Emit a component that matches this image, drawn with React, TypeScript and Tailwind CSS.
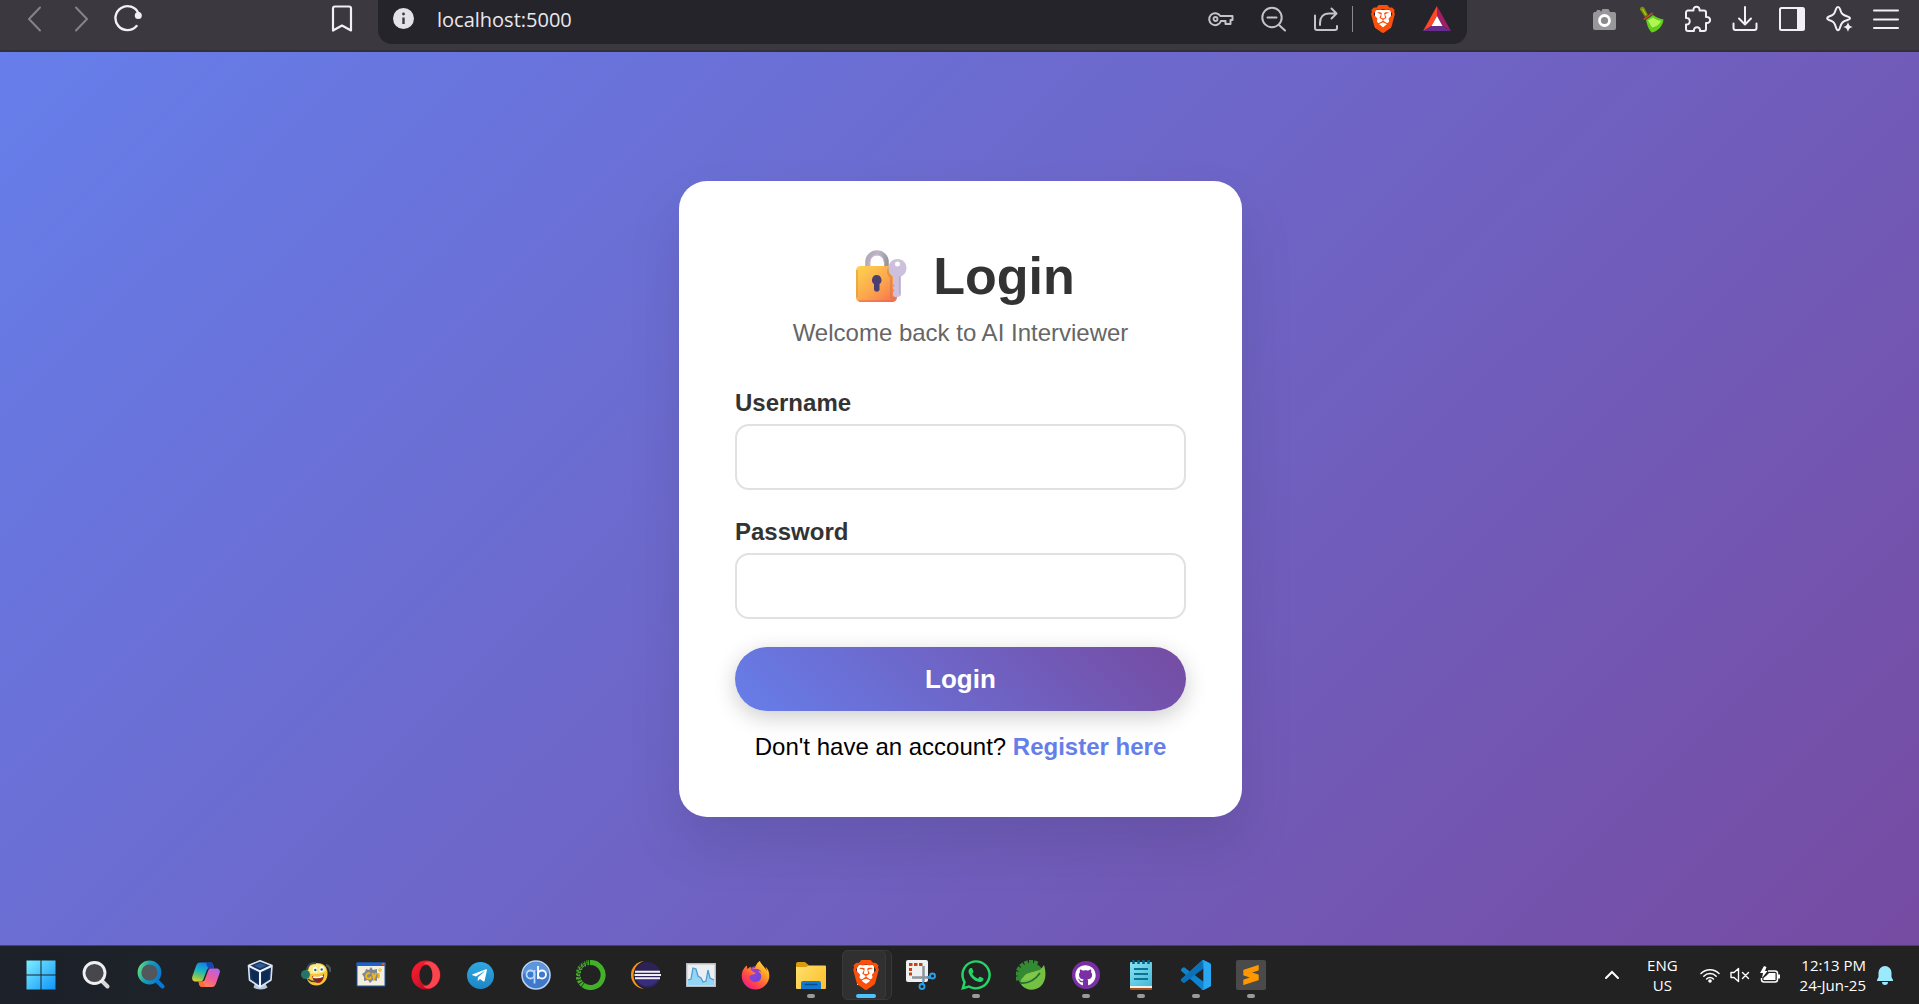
import React, { useId } from "react";
import { SiBrave, SiSublimetext } from "react-icons/si";
import { FaGithub, FaWhatsapp, FaFirefoxBrowser, FaTelegramPlane } from "react-icons/fa";

type IconProps = { children: React.ReactNode; box?: string; className?: string };

function Icon({ children, box = "0 0 30 30", className = "size-[30px]" }: IconProps) {
  return (
    <svg viewBox={box} className={className} fill="none" aria-hidden="true">
      {children}
    </svg>
  );
}

/* ---------- browser toolbar ---------- */

function ToolButton({ label, children, className = "" }: { label: string; children: React.ReactNode; className?: string }) {
  return (
    <button type="button" aria-label={label} className={`flex h-7 w-7 shrink-0 items-center justify-center ${className}`}>
      {children}
    </button>
  );
}

function BraveShield({ className }: { className: string }) {
  return (
    <span className={`relative flex items-center justify-center ${className}`}>
      <span className="absolute inset-x-[22%] inset-y-[18%] bg-white" />
      <SiBrave className="relative size-full text-[#fb4f0a]" />
    </span>
  );
}

function Toolbar() {
  return (
    <header className="flex h-[52px] shrink-0 items-start border-b-2 border-[#323036] bg-[#3b393f] text-[#f1f0f4]">
      <div className="flex w-[378px] shrink-0 items-center pt-1 pl-5">
        <ToolButton label="Back" className="text-[#85838a]">
          <Icon box="0 0 28 28" className="size-7"><path d="M20 3.500 9 15l11 11.500" stroke="currentColor" strokeWidth="2" strokeLinecap="round" strokeLinejoin="round" /></Icon>
        </ToolButton>
        <ToolButton label="Forward" className="ml-5 text-[#85838a]">
          <Icon box="0 0 28 28" className="size-7"><path d="M8 3.500 19 15 8 26.500" stroke="currentColor" strokeWidth="2" strokeLinecap="round" strokeLinejoin="round" /></Icon>
        </ToolButton>
        <ToolButton label="Reload" className="ml-[18px]">
          <Icon box="0 0 28 28" className="size-7">
            <path d="M24.500 9.500A12 12 0 1 0 22.500 22" stroke="currentColor" strokeWidth="2.400" strokeLinecap="round" />
            <circle cx="24.300" cy="11.600" r="3.500" fill="currentColor" />
          </Icon>
        </ToolButton>
        <ToolButton label="Bookmark this page" className="ml-auto mr-[22px]">
          <Icon box="0 0 28 28" className="size-7"><path d="M5 4.500A2 2 0 0 1 7 2.500H21a2 2 0 0 1 2 2V26.500L14 21.500l-9 5Z" stroke="currentColor" strokeWidth="2.200" strokeLinejoin="round" /></Icon>
        </ToolButton>
      </div>

      <div className="flex h-11 min-w-0 flex-1 items-start rounded-b-[14px] bg-[#25242a] pr-4 pl-3 text-[#c5c3ca]">
        <ToolButton label="View site information" className="mt-1">
          <Icon box="0 0 24 24" className="size-6">
            <circle cx="11.500" cy="12.500" r="10.500" fill="#e3e2e8" />
            <path d="M11.500 11.500v6.500" stroke="#3b393f" strokeWidth="2.400" />
            <circle cx="11.500" cy="8" r="1.400" fill="#3b393f" />
          </Icon>
        </ToolButton>
        <input
          aria-label="Address"
          defaultValue="localhost:5000"
          className="ml-[19px] h-[38px] min-w-0 flex-1 bg-transparent font-['Open_Sans','Noto_Sans',sans-serif] text-[20px] text-[#e9e8ee] outline-none"
        />
        <div className="flex items-center pt-[5px]">
          <ToolButton label="Passwords">
            <Icon box="0 0 28 28" className="size-7">
              <path d="M13.300 11H25.500v4H23.500v4H18.500v-3h-4.600a6 6 0 1 1-.6-5Z" stroke="currentColor" strokeWidth="2" strokeLinejoin="round" />
              <circle cx="8.500" cy="14" r="2" stroke="currentColor" strokeWidth="1.800" />
            </Icon>
          </ToolButton>
          <ToolButton label="Zoom out" className="ml-6">
            <Icon box="0 0 28 28" className="size-7">
              <path d="M20 20l6 5.500M8.500 12.500h9" stroke="currentColor" strokeWidth="2" strokeLinecap="round" />
              <circle cx="13" cy="12.500" r="9.700" stroke="currentColor" strokeWidth="2" />
            </Icon>
          </ToolButton>
          <ToolButton label="Share" className="ml-[25px]">
            <Icon box="0 0 28 28" className="size-7">
              <path d="M3 10.500V23a2 2 0 0 0 2 2H23a2 2 0 0 0 2-2v-2M8 20V18c0-5.500 3-9.500 9-9.500h7M19.500 3.500l5 5-5 5" stroke="currentColor" strokeWidth="2" strokeLinecap="round" strokeLinejoin="round" />
            </Icon>
          </ToolButton>
          <span className="mx-3 h-[26px] w-px bg-[#8a8890]" />
          <ToolButton label="Brave Shields" className="ml-1"><BraveShield className="size-7" /></ToolButton>
          <ToolButton label="Brave Rewards" className="ml-[26px]">
            <Icon box="0 0 28 26" className="h-[26px] w-7">
              <path d="M14 0 0 25l8.500-5L14 10Z" fill="#ff4724" />
              <path d="M14 0 28 25l-8.500-5L14 10Z" fill="#9e1f63" />
              <path d="M0 25H28l-8.500-5h-11Z" fill="#662d91" />
              <path d="M14 10 8.500 20h11Z" fill="#fff" />
            </Icon>
          </ToolButton>
        </div>
      </div>

      <div className="flex w-[452px] shrink-0 items-center justify-end gap-[19px] pt-[5px] pr-[19px]">
        <ToolButton label="Screenshot extension">
          <Icon box="0 0 28 28" className="size-7">
            <path d="M4 7h2l1-2h3l1 2 1.500-3h6L20 7h4a2 2 0 0 1 2 2v14a2 2 0 0 1-2 2H5a2 2 0 0 1-2-2V9Z" fill="#98979b" />
            <circle cx="14.500" cy="15.500" r="5" fill="#8a898d" stroke="#fff" strokeWidth="2.800" />
          </Icon>
        </ToolButton>
        <ToolButton label="Cleaner extension">
          <Icon box="0 0 28 28" className="size-7">
            <path d="M3 3.500C4 1 7 1.500 8 4l3 6-3 2-4-6C3 5 2.500 4.500 3 3.500Z" fill="#7c8c0a" />
            <path d="m5.500 4 3.500 6" stroke="#b4c91c" strokeWidth="1.300" />
            <path d="m9 15 7-5c3 2.500 6 3.500 10.500 4.500-.5 6-5.500 12-12 13l-2.500-3.500-1-2-1-3Z" fill="#62d01a" />
            <path d="m11 15.500 5-3c2 2 5 3 8 3.500-2 4-5 6-9 6.500Z" fill="#b2f456" />
            <path d="m7.500 14 7.500-5.500" stroke="#b5501b" strokeWidth="2" strokeLinecap="round" />
          </Icon>
        </ToolButton>
        <ToolButton label="Extensions">
          <Icon box="0 0 28 28" className="size-7">
            <path d="M4 5.500H9.500C8.500 .5 16.500 .5 15.500 5.500H20a2 2 0 0 1 2 2V12c5.500-1 5.500 7 0 6v6a2 2 0 0 1-2 2H16c1-5-7-5-6 0H4a2 2 0 0 1-2-2V19.500c5 1 5-7.500 0-6.500V7.500a2 2 0 0 1 2-2Z" stroke="currentColor" strokeWidth="2" strokeLinejoin="round" />
          </Icon>
        </ToolButton>
        <ToolButton label="Downloads">
          <Icon box="0 0 28 28" className="size-7">
            <path d="M14 2v17M8 13.500l6 6 6-6M2.500 18.500V23a2 2 0 0 0 2 2h19a2 2 0 0 0 2-2v-4.500" stroke="currentColor" strokeWidth="2" strokeLinecap="round" strokeLinejoin="round" />
          </Icon>
        </ToolButton>
        <ToolButton label="Sidebar">
          <Icon box="0 0 28 28" className="size-7">
            <rect x="2" y="3" width="24" height="22" rx="1.500" stroke="currentColor" strokeWidth="2" />
            <path d="M19 3h7v22h-7Z" fill="currentColor" />
          </Icon>
        </ToolButton>
        <ToolButton label="Assistant">
          <Icon box="0 0 28 28" className="size-7">
            <path d="M13 2c1 0 1.500.5 2 2 1.500 5 2.500 6 7.500 7.500 3.500 1 3.500 2.500 0 3.500-5 1.500-6 2.500-7.500 7.500-1 3.500-3 3.500-4 0C9.500 17.500 8.500 16.500 4 15c-2.500-1-2.500-2.500 0-3.500C8.500 10 9.500 9 11 4c.5-1.500 1-2 2-2Z" stroke="currentColor" strokeWidth="2" strokeLinejoin="round" />
            <path d="M23 17c1 3.500 1.500 4 5 5-3.500 1-4 1.500-5 5-1-3.500-1.500-4-5-5 3.500-1 4-1.500 5-5Z" fill="currentColor" />
          </Icon>
        </ToolButton>
        <ToolButton label="Menu">
          <Icon box="0 0 28 28" className="size-7"><path d="M2 5.500H26M2 14.500H26M2 23H26" stroke="currentColor" strokeWidth="2" strokeLinecap="round" /></Icon>
        </ToolButton>
      </div>
    </header>
  );
}

/* ---------- login card ---------- */

function LockWithKey() {
  return (
    <svg viewBox="0 0 72 52" className="h-[52px] w-[72px]" fill="none" role="img" aria-label="Locked with key">
      <defs>
        <linearGradient id="lockBody" x1="16" y1="16" x2="46" y2="52" gradientUnits="userSpaceOnUse">
          <stop stopColor="#ffcf4d" /><stop offset=".55" stopColor="#fba54d" /><stop offset="1" stopColor="#f97350" />
        </linearGradient>
        <linearGradient id="lockShackle" x1="20" y1="0" x2="42" y2="10" gradientUnits="userSpaceOnUse">
          <stop stopColor="#a9a6ac" /><stop offset=".5" stopColor="#bdb6c4" /><stop offset="1" stopColor="#98959c" />
        </linearGradient>
      </defs>
      <path d="M21.500 18V12a9.500 9.500 0 0 1 19 0v6" stroke="url(#lockShackle)" strokeWidth="4.600" />
      <path d="M24 18V12a7 7 0 0 1 14 0" stroke="#c9aadd" strokeWidth="1" />
      <rect x="10" y="16" width="41" height="36" rx="4.500" fill="url(#lockBody)" />
      <path d="M11 20v27" stroke="#d98c3c" strokeWidth="1.500" opacity=".6" />
      <path d="M13 51h34" stroke="#ef6150" strokeWidth="1.500" opacity=".7" />
      <path d="M30.500 25a5 5 0 0 1 3 9v6a3 3 0 0 1-5.500 0v-6a5 5 0 0 1 2.500-9Z" fill="#4b3e70" />
      <path d="M43 17c-2 5-1 8 2 10v20c0 2 2 2 4 1" stroke="#c97745" strokeWidth="2" opacity=".5" />
      <path fillRule="evenodd" d="M51.500 9c5.500 0 9 4 9 9 0 4-2 7-5.500 8.500V45c0 2-8 3.500-8 0v-3l1.500-1.500L47 39v-2l1.500-1.500L47 34v-7.500c-3.500-2-4.500-5-4.500-8.500 0-5 3.500-9 9-9Zm0 2.500a2.500 2.500 0 1 0 0 5 2.500 2.500 0 0 0 0-5Z" fill="#cdc0dd" />
      <path d="M53.500 26v18" stroke="#bba8d3" strokeWidth="1.200" />
    </svg>
  );
}

function Field({ label, type }: { label: string; type: string }) {
  const id = useId();
  return (
    <div className="flex flex-col gap-[7px]">
      <label htmlFor={id} className="font-bold text-[#333]">{label}</label>
      <input id={id} type={type} className="h-[66px] w-full rounded-[14px] border-2 border-[#e1e1e1] bg-white px-5 outline-none" />
    </div>
  );
}

function LoginCard() {
  return (
    <section className="w-full max-w-[563px] rounded-[28px] bg-white p-14 font-['Liberation_Sans',Arial,sans-serif] text-[24px] leading-7 text-black shadow-[0_28px_56px_rgba(0,0,0,0.1)]">
      <div className="text-center">
        <h1 className="flex items-center justify-center gap-[15px] text-[52px] leading-[78px] font-bold text-[#333]">
          <LockWithKey />
          Login
        </h1>
        <p className="mt-1 text-[#666]">Welcome back to AI Interviewer</p>
      </div>
      <form className="mt-[42px] flex flex-col gap-7" onSubmit={(e) => e.preventDefault()}>
        <Field label="Username" type="text" />
        <Field label="Password" type="password" />
        <button type="submit" className="h-16 w-full rounded-full bg-[linear-gradient(45deg,#667eea,#764ba2)] text-[26px] font-bold text-white shadow-[0_6px_22px_rgba(0,0,0,0.2)]">
          Login
        </button>
      </form>
      <p className="mt-[22px] text-center">
        Don't have an account?{" "}
        <a href="#register" className="font-bold text-[#667eea]">Register here</a>
      </p>
    </section>
  );
}

/* ---------- taskbar ---------- */

const toothAngles = [-80, -60, -40, -20, 0, 20, 40];

const apps: { name: string; running?: boolean; active?: boolean; icon: React.ReactNode }[] = [
  {
    name: "Start",
    icon: (
      <Icon>
        <defs><linearGradient id="win" x1="0" y1="0" x2="30" y2="30" gradientUnits="userSpaceOnUse"><stop stopColor="#7ff0ff" /><stop offset="1" stopColor="#0c93fa" /></linearGradient></defs>
        <path d="M.5.500h14v14H.5ZM15.500.500h14v14h-14ZM.5 15.500h14v14H.5ZM15.500 15.500h14v14h-14Z" fill="url(#win)" />
      </Icon>
    ),
  },
  {
    name: "Search",
    icon: (
      <Icon>
        <path d="m21.500 21.500 5 5" stroke="#d8d8da" strokeWidth="4" strokeLinecap="round" />
        <circle cx="13.500" cy="13" r="10.500" fill="#46484e" stroke="#f0f0f2" strokeWidth="2.800" />
      </Icon>
    ),
  },
  {
    name: "Search highlights",
    icon: (
      <Icon>
        <defs><linearGradient id="srch" x1="2" y1="8" x2="26" y2="16" gradientUnits="userSpaceOnUse"><stop stopColor="#5fdc7c" /><stop offset=".4" stopColor="#149fb8" /><stop offset="1" stopColor="#0873d4" /></linearGradient></defs>
        <path d="m21.500 21.500 5 5" stroke="#0878d8" strokeWidth="4" strokeLinecap="round" />
        <circle cx="13.500" cy="12.500" r="10" fill="#53565a" stroke="url(#srch)" strokeWidth="3.800" />
      </Icon>
    ),
  },
  {
    name: "Copilot",
    icon: (
      <Icon>
        <defs>
          <linearGradient id="cpA" x1="10" y1="2" x2="4" y2="22" gradientUnits="userSpaceOnUse"><stop stopColor="#1680e8" /><stop offset=".4" stopColor="#17b5c4" /><stop offset=".7" stopColor="#72c65a" /><stop offset="1" stopColor="#f2d030" /></linearGradient>
          <linearGradient id="cpB" x1="25" y1="8" x2="14" y2="28" gradientUnits="userSpaceOnUse"><stop stopColor="#b064ee" /><stop offset=".5" stopColor="#ef5b9c" /><stop offset="1" stopColor="#ff8a4c" /></linearGradient>
        </defs>
        <path d="M9 2.500h10c2.500 0 3 1.500 3.500 3.500l.5 2h-4c-2 0-3 1-3.500 3l-3 8c-.7 1.700-1.500 2.500-3.500 2.500H4.500C1.500 21.500.5 19 1.500 16L5 6c1-2.500 2-3.500 4-3.500Z" fill="url(#cpA)" />
        <path d="M15 2.500h4.500c2 0 2.500 1.500 3 3.500l.5 2.500h-5c-1.500-1-2.500-3-3-6Z" fill="#1647b7" />
        <path d="M21 27H11.500c-2.500 0-3-1.500-3.500-3.500l-.5-2H11c2 0 2.500-1 3-2.500l3-8c.7-2 1.500-2.500 3.500-2.500h5c3 0 4 2.500 3 5L25 23.500C24 26 23 27 21 27Z" fill="url(#cpB)" />
        <path d="M15.500 27h-4c-2.500 0-3-1.500-3.500-3.500l-.5-2H11Z" fill="#ff6b3c" />
      </Icon>
    ),
  },
  {
    name: "VirtualBox",
    icon: (
      <Icon>
        <path d="M9 23h10l2.500 4.500c-3 2.500-11 2.500-14 0Z" fill="#b9c8e0" />
        <path d="M14 .800 26 5.500 25 20l-11 7L3.500 20 2.500 5.500Z" fill="#17345f" stroke="#dbe5f3" strokeWidth="1.600" strokeLinejoin="round" />
        <path d="m3 6 11 5.500L25.500 6M14 11.500V27" stroke="#eef4fb" strokeWidth="2" />
        <path d="m8 5.500 6-2.500 6.500 2.500L14 8.500Z" fill="#315b93" />
        <path d="m5 9.500 7 3.500v10l-6-4ZM23.500 9.500 16 13v10l6.500-4Z" fill="#0f2a52" />
      </Icon>
    ),
  },
  {
    name: "Voice chat",
    icon: (
      <Icon>
        <path d="M16 3c7 0 10 4 10.500 9.500C27 20 22 25.500 15.500 25.500 9 25.500 5 21 5 13 5 6.500 9 3 16 3Z" fill="#f3c53a" />
        <path d="M16 4c6 0 8.500 3 9 7-5 3-12 4-18 2 0-6 3-9 9-9Z" fill="#fbe98a" />
        <circle cx="4.500" cy="14.500" r="4.500" fill="#23746c" /><path d="M6 10C7 4 10 3 15 3" stroke="#3b4b4e" strokeWidth="2" />
        <path d="M25 5c3 1 4.500 3.500 4.500 7" stroke="#46565a" strokeWidth="2.500" />
        <ellipse cx="14" cy="9.500" rx="2" ry="3" fill="#fff" /><ellipse cx="20.500" cy="9" rx="2" ry="3" fill="#fff" />
        <circle cx="14.300" cy="10" r="1.200" fill="#21706a" /><circle cx="20.700" cy="9.500" r="1.200" fill="#21706a" />
        <path d="M11 16c4 2 9 1 12-2 0 6-3 9-6 9s-5-3-6-7Z" fill="#8b2016" /><path d="M12 17c4 1 7 .5 10-1" stroke="#fff" strokeWidth="1.500" />
        <path d="M7 19c3 3 6 3 10 2" stroke="#444" strokeWidth="1.600" />
      </Icon>
    ),
  },
  {
    name: "Window designer",
    icon: (
      <Icon>
        <path d="M1 3h28v23H1Z" fill="#f3efdf" stroke="#1b55b1" />
        <path d="M.5 2.500h29V6H.5Z" fill="#1f62c9" /><path d="M26 3h2.500v2H26Z" fill="#e2583d" />
        <path d="m15 7 2 3 4-1v4l3 3-3 2v3l-4-1-3 3-2-3-4 1v-4l-2-3 3-2 1-3 3 1Z" fill="#7e8790" />
        <path d="M14 13.500c-4-2-5.500 5-1.500 5h2v-2M16.500 13l1.500 5.500 2-5.500M22.500 13v5.500" stroke="#f2b51a" strokeWidth="2" />
        <path d="M24 8v4M22 10h4" stroke="#f8c73b" strokeWidth="1.400" />
      </Icon>
    ),
  },
  {
    name: "Opera",
    icon: (
      <Icon>
        <defs><linearGradient id="op" x1="2" y1="4" x2="26" y2="28" gradientUnits="userSpaceOnUse"><stop stopColor="#ff1b2d" /><stop offset=".5" stopColor="#d5152c" /><stop offset="1" stopColor="#a70014" /></linearGradient></defs>
        <path fillRule="evenodd" d="M15 .5a14.500 14.500 0 1 1 0 29 14.500 14.500 0 0 1 0-29Zm0 4.500c-4 0-6.500 4.500-6.500 10S11 25 15 25s6.500-4.500 6.500-10S19 5 15 5Z" fill="url(#op)" />
        <path d="M12 4.500c3-4.500 8-3.500 12-.5a14.500 14.500 0 0 1 0 22c-4 3-9 4-12-.5 5 2 9.500-3 9.500-10.500S17 2.500 12 4.500Z" fill="#f9454d" />
      </Icon>
    ),
  },
  {
    name: "Telegram",
    icon: (
      <span className="flex size-[27px] items-center justify-center rounded-full bg-linear-to-b from-[#2fa9e3] to-[#1c87c4]">
        <FaTelegramPlane className="mr-0.5 size-[17px] text-white" />
      </span>
    ),
  },
  {
    name: "qBittorrent",
    icon: (
      <Icon>
        <circle cx="15" cy="15" r="14" fill="#3f79cc" stroke="#b7d2ef" strokeWidth="1.600" />
        <path d="M2 14C3 6 9 2 15 2s12 4 13 11c-8-3-18-3-26 1Z" fill="#5d96dc" />
        <circle cx="9.500" cy="14.500" r="4" stroke="#b9d9ff" strokeWidth="1.800" /><path d="M13.500 10v13.500" stroke="#b9d9ff" strokeWidth="1.800" />
        <path d="M17 6v13" stroke="#fff" strokeWidth="1.800" /><circle cx="21" cy="14.500" r="4" stroke="#fff" strokeWidth="1.800" />
      </Icon>
    ),
  },
  {
    name: "Anaconda",
    icon: (
      <Icon>
        <path d="M14 2.500A12.500 12.500 0 1 1 7 24.900" stroke="#43b02a" strokeWidth="5" />
        <path d="M13 2.600A12.500 12.500 0 0 0 6.500 24.500" stroke="#43b02a" strokeWidth="5" strokeDasharray="2.500 .8" />
        <path d="M12 .9A14.200 14.200 0 0 0 3 23" stroke="#222" strokeWidth="1.200" strokeDasharray="1.500 2.500" />
        <path d="M12 3A12.300 12.300 0 0 0 5 22" stroke="#222" strokeWidth="1" strokeDasharray="1 2" />
        <path d="M12 5A10.500 10.500 0 0 0 6 20" stroke="#222" strokeWidth="1.200" strokeDasharray="2 2" />
      </Icon>
    ),
  },
  {
    name: "Eclipse",
    icon: (
      <Icon>
        <circle cx="14" cy="15" r="14" fill="#f7941e" />
        <circle cx="17" cy="15" r="14.500" fill="#222" />
        <circle cx="16.500" cy="15" r="13" fill="#2c2255" />
        <path d="M6 20h21c-3 7-17 9-21 0Z" fill="#41349a" opacity=".6" />
        <path d="M4 11.700h25M3.500 15h26.500M4 18.300h25" stroke="#f3f1f8" strokeWidth="2" />
      </Icon>
    ),
  },
  {
    name: "Resource monitor",
    icon: (
      <Icon>
        <path d="M.7 3.700h28.600v22.600H.7Z" fill="#eceff2" stroke="#b5bac0" strokeWidth="1.400" />
        <path d="M2 20l3-1 2-11 3 1 2 7 3 2 2 4 3-1 2-11 2 8 4 2v5H2Z" fill="#93d5f5" />
        <path d="M2 20l3-1 2-11 3 1 2 7 3 2 2 4 3-1 2-11 2 8 4 2" stroke="#4f9bd2" strokeWidth="1.300" />
      </Icon>
    ),
  },
  {
    name: "Firefox",
    icon: (
      <span className="relative flex size-[30px] items-center justify-center">
        <svg width="0" height="0" className="absolute">
          <linearGradient id="ff" x1="1" y1="0" x2=".2" y2="1"><stop stopColor="#fff04a" /><stop offset=".35" stopColor="#ffa625" /><stop offset=".7" stopColor="#ff4b45" /><stop offset="1" stopColor="#ee168d" /></linearGradient>
        </svg>
        <span className="absolute size-[18px] rounded-full bg-linear-to-br from-[#a53ad8] to-[#5b45d7]" />
        <FaFirefoxBrowser className="relative size-[29px] [&_path]:fill-[url(#ff)]" />
      </span>
    ),
  },
  {
    name: "File Explorer",
    running: true,
    icon: (
      <Icon>
        <path d="M0 4a2 2 0 0 1 2-2h7l4 3.500V9H0Z" fill="#dc9b0e" />
        <defs><linearGradient id="fold" x1="0" y1="5" x2="30" y2="28" gradientUnits="userSpaceOnUse"><stop stopColor="#ffdf6e" /><stop offset="1" stopColor="#fcc02b" /></linearGradient></defs>
        <path d="M0 7h10l3-1.500h16a1 1 0 0 1 1 1V28a1 1 0 0 1-1 1H1a1 1 0 0 1-1-1Z" fill="url(#fold)" />
        <path d="M5 29v-6a2 2 0 0 1 2-2h16a2 2 0 0 1 2 2v6Z" fill="#1279cf" /><path d="M8.500 24.500h13" stroke="#0a4a8d" strokeWidth="1.500" />
      </Icon>
    ),
  },
  { name: "Brave", running: true, active: true, icon: <BraveShield className="size-[30px]" /> },
  {
    name: "Snipping Tool",
    icon: (
      <Icon>
        <rect x="0" y="0" width="22" height="22" rx="2" fill="#eef0f2" />
        <path d="M3 4.500h14" stroke="#c9410e" strokeWidth="3" strokeDasharray="3.500 1.500" /><path d="M4.500 8v8" stroke="#c9410e" strokeWidth="3" strokeDasharray="3 1.500" />
        <path d="M17.500 6v15M6 17.500h18" stroke="#8d959c" strokeWidth="2.500" />
        <circle cx="26.500" cy="16" r="2.500" stroke="#2b9ee8" strokeWidth="1.900" /><circle cx="16" cy="26.500" r="2.500" stroke="#2b9ee8" strokeWidth="1.900" />
        <path d="m17.500 21-1 3M21 17.500l3-1" stroke="#2b9ee8" strokeWidth="2" />
      </Icon>
    ),
  },
  { name: "WhatsApp", running: true, icon: <FaWhatsapp className="size-[34px] text-[#25d366]" /> },
  {
    name: "Spring Tools",
    icon: (
      <Icon>
        <circle cx="15" cy="16" r="13" fill="#348a32" />
        {toothAngles.map((a) => (
          <path key={a} d="M13 0h4v5h-4Z" fill="#348a32" transform={`rotate(${a - 20} 15 16)`} />
        ))}
        <path d="M28 5c2.500 8 2 16-3 21-6 5.500-15 4.500-19-.5C2.500 21 6 17 11 15.500 18 14 24 11.500 28 5Z" fill="#74c043" />
        <path d="M4 23c9 1 15-3 20-10" stroke="#1f6f35" strokeWidth="1.800" />
        <path d="M7 20c0-8 10-7 16-10-1 6-6 10-16 10Z" fill="#81c64b" />
      </Icon>
    ),
  },
  {
    name: "GitHub Desktop",
    running: true,
    icon: (
      <span className="flex size-7 items-center justify-center rounded-full bg-[#7b2fa5]">
        <FaGithub className="size-[21px] text-white" />
      </span>
    ),
  },
  {
    name: "Notepad",
    running: true,
    icon: (
      <Icon>
        <defs><linearGradient id="note" x1="4" y1="2" x2="26" y2="27" gradientUnits="userSpaceOnUse"><stop stopColor="#8be3f3" /><stop offset="1" stopColor="#41b8da" /></linearGradient></defs>
        <path d="M4 25h22v4a1 1 0 0 1-1 1H5a1 1 0 0 1-1-1Z" fill="#a5501c" /><path d="M4 24h22v4H4Z" fill="#f5efea" />
        <path d="M4 3a1 1 0 0 1 1-1h20a1 1 0 0 1 1 1v23H4Z" fill="url(#note)" />
        <path d="M7.500 0v4M12.500 0v4M17.500 0v4M22.500 0v4" stroke="#0d5f7d" strokeWidth="2.600" />
        <path d="M8 9h14M8 14h14M8 19h14" stroke="#0e7393" strokeWidth="1.900" />
      </Icon>
    ),
  },
  {
    name: "Visual Studio Code",
    running: true,
    icon: (
      <Icon box="0 0 24 24">
        <path d="M23.150 2.587L18.210.210a1.494 1.494 0 0 0-1.705.290l-9.460 8.630-4.120-3.128a.999.999 0 0 0-1.276.057L.327 7.261A1 1 0 0 0 .326 8.740L3.899 12 .326 15.260a1 1 0 0 0 .001 1.479L1.650 17.940a.999.999 0 0 0 1.276.057l4.120-3.128 9.460 8.630a1.492 1.492 0 0 0 1.704.290l4.942-2.377A1.500 1.500 0 0 0 24 20.060V3.939a1.500 1.500 0 0 0-.850-1.352zm-5.146 14.861L10.826 12l7.178-5.448v10.896z" fill="#0e83cf" />
        <path d="M7.045 9.130 16.505.5 18 6.552 3 18l-1.350-.06-1.323-1.200v-1.480Z" fill="#0a70b8" />
        <path d="m18.210.210 4.940 2.377A1.500 1.500 0 0 1 24 3.939V20.060a1.500 1.500 0 0 1-.848 1.352L18.210 23.790c-.6.250-1.200.150-1.700-.290.900.500 1.500 0 1.500-1V1.500c0-1-.600-1.500-1.500-1 .500-.450 1.100-.550 1.700-.290Z" fill="#2aa7f3" />
      </Icon>
    ),
  },
  {
    name: "Sublime Text",
    running: true,
    icon: (
      <span className="flex size-[30px] items-center justify-center rounded-xs bg-[#4a4a4a]">
        <SiSublimetext className="size-5 text-[#ff9800]" />
      </span>
    ),
  },
];

function Taskbar() {
  return (
    <footer className="flex h-[59px] shrink-0 items-stretch border-t border-[#47474c] bg-[linear-gradient(90deg,#1c212a_0%,#1e2228_10%,#222_18%,#222_100%)] font-['Open_Sans','Noto_Sans',sans-serif] text-[15px] leading-5 text-white">
      <nav aria-label="Taskbar" className="flex pl-[13px]">
        {apps.map((app) => (
          <button key={app.name} type="button" aria-label={app.name} className="relative flex w-[55px] items-center justify-center">
            {app.active && (
              <>
                <span className="absolute inset-y-1 left-1 w-[50px] rounded-md border border-[#383838] bg-[#292929]" />
                <span className="absolute inset-y-1 left-1 w-11 rounded-md border border-[#3a3a3a] bg-[#303030]" />
              </>
            )}
            <span className="relative flex">{app.icon}</span>
            {app.running && (
              <span className={app.active ? "absolute bottom-1.5 h-1 w-5 rounded-full bg-[#4cc2ff]" : "absolute bottom-1.5 h-1 w-2 rounded-full bg-[#9a9a9a]"} />
            )}
          </button>
        ))}
      </nav>
      <div className="ml-auto flex items-center pr-[26px]">
        <button type="button" aria-label="Show hidden icons" className="mr-[27px] flex">
          <Icon box="0 0 16 10" className="h-2.5 w-4"><path d="m2 8 6-6 6 6" stroke="#fff" strokeWidth="2" strokeLinecap="round" /></Icon>
        </button>
        <button type="button" className="mr-[22px] text-center">ENG<br />US</button>
        <button type="button" aria-label="Network, sound and battery" className="mr-5 flex items-center gap-2.5">
          <Icon box="0 0 20 16" className="h-4 w-5">
            <path d="M1 6.500a12.500 12.500 0 0 1 18 0M3.800 9.300a8.500 8.500 0 0 1 12.400 0M6.600 12a4.700 4.700 0 0 1 6.800 0" stroke="#fff" strokeWidth="1.500" strokeLinecap="round" />
            <circle cx="10" cy="14" r="1.800" fill="#fff" />
          </Icon>
          <Icon box="0 0 20 16" className="h-4 w-5"><path d="M1 5.500h3L8.500 1.500v13L4 10.500H1ZM12.500 5.500l6 6M18.500 5.500l-6 6" stroke="#fff" strokeWidth="1.400" strokeLinejoin="round" strokeLinecap="round" /></Icon>
          <Icon box="0 0 20 18" className="h-[18px] w-5">
            <path d="M8 5h7a2.500 2.500 0 0 1 2.500 2.500v6A2.500 2.500 0 0 1 15 16H4a2.500 2.500 0 0 1-2.500-2.500V12" stroke="#fff" strokeWidth="1.500" />
            <path d="M9 7h6.500v7H3.500v-2L6 10Z" fill="#fff" /><path d="M18 8.500h2v4h-2Z" fill="#fff" />
            <path d="M4 0 0 7h3l-1 5 5.500-7H5l1.500-4Z" fill="#fff" />
          </Icon>
        </button>
        <button type="button" className="mr-[11px] text-right">12:13 PM<br />24-Jun-25</button>
        <button type="button" aria-label="Notifications" className="flex">
          <Icon box="0 0 16 20" className="h-5 w-4">
            <path d="M8 1a6.500 6.500 0 0 1 6.500 6.500V12l1.500 3v1H0v-1l1.500-3V7.500A6.500 6.500 0 0 1 8 1ZM5 17h6a3 3 0 0 1-6 0Z" fill="#9be9fc" />
          </Icon>
        </button>
      </div>
    </footer>
  );
}

export default function App() {
  return (
    <div className="flex min-h-screen flex-col">
      <Toolbar />
      <main className="flex flex-1 items-center justify-center bg-[linear-gradient(135deg,#667eea_0%,#764ba2_100%)] pl-0.5">
        <LoginCard />
      </main>
      <Taskbar />
    </div>
  );
}
